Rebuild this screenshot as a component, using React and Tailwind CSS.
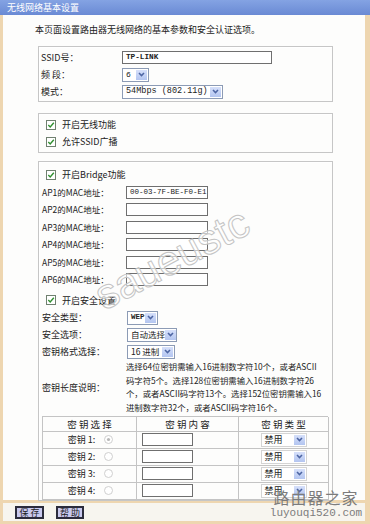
import React from "react";

const cjk = "font-['Noto_Sans_CJK_SC',sans-serif]";
const mono = "font-['Liberation_Mono','Noto_Sans_CJK_SC',monospace]";

const Arrow = () => (
  <span className="ml-auto mr-[1px] flex h-[10px] w-[11px] shrink-0 items-center justify-center bg-gradient-to-b from-[#d6e0fa] to-[#b3c5f0]">
    <svg width="7" height="5" viewBox="0 0 7 5">
      <path d="M1 1 3.5 3.6 6 1" stroke="#4d65a3" strokeWidth="1.5" fill="none" />
    </svg>
  </span>
);

const Select = ({ className, children }) => (
  <div className={`flex h-[14px] items-center border border-[#8c9bb5] bg-white ${className}`}>
    <span className="whitespace-nowrap pl-[3px] leading-none">{children}</span>
    <Arrow />
  </div>
);

const Check = () => (
  <svg width="10" height="10" viewBox="0 0 10 10" className="shrink-0">
    <rect x="0.5" y="0.5" width="9" height="9" fill="#fff" stroke="#6f806f" />
    <path d="M2.3 5 4.2 6.9 7.8 2.8" stroke="#2f8f2f" strokeWidth="1.4" fill="none" />
  </svg>
);

const Radio = ({ on }) => (
  <svg width="9" height="9" viewBox="0 0 9 9" className="shrink-0">
    <circle cx="4.5" cy="4.5" r="4" fill="#fff" stroke="#cfcfcf" />
    {on && <circle cx="4.5" cy="4.5" r="1.6" fill="#b8b8b8" />}
  </svg>
);

const Input = ({ className, children }) => (
  <div className={`flex h-[13px] items-center border border-[#6f6f6f] bg-white pl-[3px] ${className}`}>
    {children}
  </div>
);

const Box = ({ className, children }) => (
  <div className={`w-[295px] border border-[#c6c6c6] shadow-[inset_1px_1px_0_#fff] ${className}`}>
    {children}
  </div>
);

const keys = [1, 2, 3, 4];

export default function App() {
  return (
    <div className={`relative h-[524px] w-[370px] overflow-hidden bg-[#fdfdfc] text-[9px] text-[#222] ${cjk}`}>
      <div className="flex h-[15px] items-center bg-gradient-to-b from-[#84a3e3] to-[#6a8ad4] pl-[7px] text-white">
        无线网络基本设置
      </div>

      <div className="flex h-[488px] flex-col border-b-[3px] border-l-[3px] border-r-[5px] border-[#eed6b0] pl-[35px]">
        <p className="-ml-[3px] mt-[9px] h-[12px] leading-[12px]">本页面设置路由器无线网络的基本参数和安全认证选项。</p>

        <Box className="mt-[10px] pb-[1px] pl-[2px] pt-[2px]">
          <div className="flex h-[17px] items-center">
            <span className="w-[81px]">SSID号：</span>
            <Input className={`w-[150px] font-bold text-[7.7px] ${mono}`}>TP-LINK</Input>
          </div>
          <div className="flex h-[17px] items-center">
            <span className="w-[81px]">频&nbsp;段：</span>
            <Select className={`w-[27px] text-[8px] ${mono}`}>6</Select>
          </div>
          <div className="flex h-[17px] items-center">
            <span className="w-[81px]">模式：</span>
            <Select className={`w-[101px] text-[8.5px] ${mono}`}>54Mbps (802.11g)</Select>
          </div>
        </Box>

        <Box className="mt-[11px] py-[2px] pl-[7px]">
          <div className="flex h-[17px] items-center gap-[6px]">
            <Check />
            <span>开启无线功能</span>
          </div>
          <div className="flex h-[17px] items-center gap-[6px]">
            <Check />
            <span>允许SSID广播</span>
          </div>
        </Box>

        <Box className="mt-[8px] pl-[3px] pt-[4px]">
          <div className="flex h-[17.5px] items-center gap-[6px] pl-[4px]">
            <Check />
            <span>开启Bridge功能</span>
          </div>
          {[1, 2, 3, 4, 5, 6].map((n) => (
            <div key={n} className="flex h-[17.5px] items-center">
              <span className="w-[84px] text-[8.5px]">AP{n}的MAC地址：</span>
              <Input className={`w-[82px] text-[7.5px] ${mono}`}>{n === 1 ? "00-03-7F-BE-F0-E1" : ""}</Input>
            </div>
          ))}
          <div className="mt-[3px] flex h-[17.5px] items-center gap-[6px] pl-[4px]">
            <Check />
            <span>开启安全设置</span>
          </div>
          <div className="flex h-[17px] items-center">
            <span className="w-[85px]">安全类型：</span>
            <Select className={`w-[31px] font-bold text-[7.5px] ${mono}`}>WEP</Select>
          </div>
          <div className="flex h-[17px] items-center">
            <span className="w-[85px]">安全选项：</span>
            <Select className="w-[50px] text-[8.5px]">自动选择</Select>
          </div>
          <div className="flex h-[17px] items-center">
            <span className="w-[85px]">密钥格式选择：</span>
            <Select className="w-[48px] text-[8.5px]">16 进制</Select>
          </div>
          <div className="flex items-center">
            <span className="w-[84px]">密钥长度说明：</span>
            <p className="whitespace-nowrap text-[8.4px] leading-[13.7px]">
              选择64位密钥需输入16进制数字符10个，或者ASCII<br />
              码字符5个。选择128位密钥需输入16进制数字符26<br />
              个，或者ASCII码字符13个。选择152位密钥需输入16<br />
              进制数字符32个，或者ASCII码字符16个。
            </p>
          </div>

          <div className="mt-[1px] grid w-[286px] grid-cols-[94px_102px_90px] border-l border-t border-[#c4c4c4]">
            {["密 钥 选 择", "密 钥 内 容", "密 钥 类 型"].map((t) => (
              <div key={t} className="flex h-[15px] items-center justify-center border-b border-r border-[#c4c4c4] text-[9.5px]">
                {t}
              </div>
            ))}
            {keys.map((k) => (
              <React.Fragment key={k}>
                <div className="flex h-[17px] items-center justify-center gap-[9px] border-b border-r border-[#c4c4c4] pl-[2px]">
                  <span>密钥 {k}:</span>
                  <Radio on={k === 1} />
                </div>
                <div className="flex h-[17px] items-center border-b border-r border-[#c4c4c4] pl-[5px]">
                  <Input className="w-[51px]" />
                </div>
                <div className="flex h-[17px] items-center justify-center border-b border-r border-[#c4c4c4]">
                  <Select className="w-[46px] border-[#d4d4d4]">禁用</Select>
                </div>
              </React.Fragment>
            ))}
          </div>
        </Box>
      </div>

      <div className="flex h-[21px] items-center gap-[12px] border-b-[3px] border-l-[3px] border-r-[5px] border-[#eed6b0] bg-[#f7f5ef] pl-[12px]">
        <button className="flex h-[13px] w-[29px] items-center justify-center border-2 border-[#2c2c3c] bg-[#c9c9ee] text-[9px] leading-none">
          保 存
        </button>
        <button className="flex h-[13px] w-[28px] items-center justify-center border-2 border-[#2c2c3c] bg-[#c9c9ee] text-[9px] leading-none">
          帮 助
        </button>
      </div>

      <div className="pointer-events-none absolute left-[88px] top-[238px] -rotate-[28deg] font-['Liberation_Sans',sans-serif] text-[42px] leading-none text-white/60 [-webkit-text-stroke:1px_#c4c4c4]">
        saueustc
      </div>
      <div className="pointer-events-none absolute left-[268px] top-[489px] flex w-[96px] flex-col items-center text-[#7c7c7c]">
        <span className="text-[16px] leading-[17px] tracking-[1px]">路由器之家</span>
        <span className={`text-[11px] leading-[14px] ${mono}`}>luyouqi520.com</span>
      </div>
    </div>
  );
}
